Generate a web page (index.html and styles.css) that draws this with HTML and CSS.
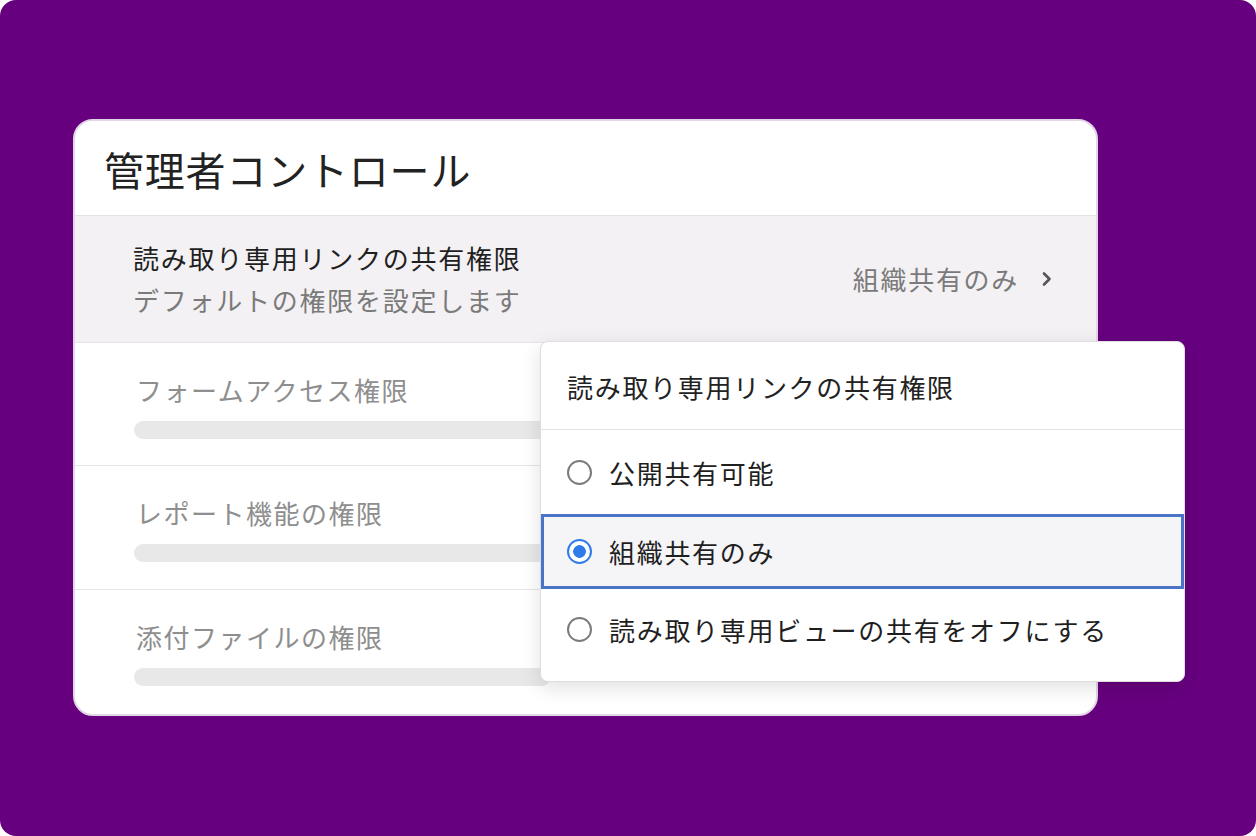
FILE: index.html
```html
<!DOCTYPE html>
<html lang="ja">
<head>
<meta charset="utf-8">
<link rel="stylesheet" href="styles.css">
</head>
<body>
<div class="frame">
  <div class="card">
    <div class="card-head">管理者コントロール</div>
    <div class="row row-active">
      <div class="row-text">
        <div class="row-title">読み取り専用リンクの共有権限</div>
        <div class="row-sub">デフォルトの権限を設定します</div>
      </div>
      <div class="row-value">
        <span>組織共有のみ</span>
        <svg class="chev" width="12" height="16" viewBox="0 0 12 16"><path d="M3 2.5 L8.5 8 L3 13.5" fill="none" stroke="#555" stroke-width="2.6" stroke-linecap="round" stroke-linejoin="round"/></svg>
      </div>
    </div>
    <div class="row row-muted">
      <div class="muted-title">フォームアクセス権限</div>
      <div class="skeleton"></div>
    </div>
    <div class="row row-muted">
      <div class="muted-title">レポート機能の権限</div>
      <div class="skeleton"></div>
    </div>
    <div class="row row-muted row-last">
      <div class="muted-title">添付ファイルの権限</div>
      <div class="skeleton"></div>
    </div>

    <div class="dropdown">
      <div class="dd-head">読み取り専用リンクの共有権限</div>
      <div class="dd-item dd-first"><span class="radio"></span><span>公開共有可能</span></div>
      <div class="dd-item dd-selected"><span class="radio radio-on"></span><span>組織共有のみ</span></div>
      <div class="dd-item dd-third"><span class="radio"></span><span>読み取り専用ビューの共有をオフにする</span></div>
    </div>
  </div>
</div>
</body>
</html>
```
FILE: styles.css
```css
html, body {
  margin: 0;
  padding: 0;
  background: #ffffff;
}
body {
  font-family: "Noto Sans CJK JP", "Noto Sans", sans-serif;
}
.frame {
  width: 1256px;
  height: 836px;
  box-sizing: border-box;
  background: #67007f;
  border-radius: 16px;
  padding: 119px 0 0 73px;
}
.card {
  position: relative;
  width: 1025px;
  height: 597px;
  box-sizing: border-box;
  background: #fff;
  border: 2px solid #e3d6e6;
  border-radius: 20px;
  overflow: visible;
  display: flex;
  flex-direction: column;
}
.card-head {
  height: 95px;
  box-sizing: border-box;
  padding: 3px 0 0 29px;
  display: flex;
  align-items: center;
  font-size: 40px;
  color: #222;
  letter-spacing: 0.8px;
  border-bottom: 1px solid #e4e2e4;
}
.row {
  border-bottom: 1px solid #e6e4e6;
  box-sizing: border-box;
}
.row-active {
  height: 127px;
  background: #f3f1f3;
  display: flex;
  align-items: center;
  justify-content: space-between;
  padding: 0 43px 0 58px;
}
.row-title, .row-sub {
  font-size: 26px;
  line-height: 42px;
  letter-spacing: 1.75px;
}
.row-title { color: #1f1f1f; }
.row-sub { color: #7a7a7a; }
.row-value {
  display: flex;
  align-items: center;
  gap: 22px;
  font-size: 26px;
  color: #7a7a7a;
  letter-spacing: 1.7px;
}
.row-muted {
  height: 124px;
  padding: 26px 0 0 61px;
}
.row-last {
  border-bottom: none;
}
.muted-title {
  font-size: 26px;
  line-height: 42px;
  color: #8e8e8e;
  letter-spacing: 1.5px;
}
.skeleton {
  margin-top: 10px;
  margin-left: -2px;
  width: 417px;
  height: 18px;
  border-radius: 9px;
  background: #e9e8e9;
}
.dropdown {
  position: absolute;
  left: 465px;
  top: 220px;
  width: 645px;
  height: 341px;
  box-sizing: border-box;
  background: #fff;
  border: 1px solid #dedede;
  border-radius: 8px;
  box-shadow: 0 6px 20px rgba(0,0,0,0.12);
  display: flex;
  flex-direction: column;
  padding-bottom: 12px;
}
.dd-head {
  height: 88px;
  box-sizing: border-box;
  border-bottom: 1px solid #e4e2e4;
  padding: 2px 0 0 26px;
  display: flex;
  align-items: center;
  font-size: 26px;
  color: #222;
  letter-spacing: 1.7px;
}
.dd-item {
  display: flex;
  align-items: center;
  gap: 17px;
  padding-left: 26px;
  font-size: 26px;
  color: #1f1f1f;
  letter-spacing: 1.7px;
  box-sizing: border-box;
}
.dd-first { height: 85px; }
.dd-selected {
  height: 75px;
  border: 3px solid #4b74c7;
  background: #f5f4f6;
  padding-left: 23px;
}
.dd-third { height: 80px; }
.radio {
  width: 25px;
  height: 25px;
  box-sizing: border-box;
  border: 2px solid #7b7b7b;
  border-radius: 50%;
  flex: none;
  background: #fff;
}
.radio-on {
  border-color: #2f7be9;
  background: radial-gradient(circle, #2f7be9 0 6px, #fff 6.6px);
}
```
